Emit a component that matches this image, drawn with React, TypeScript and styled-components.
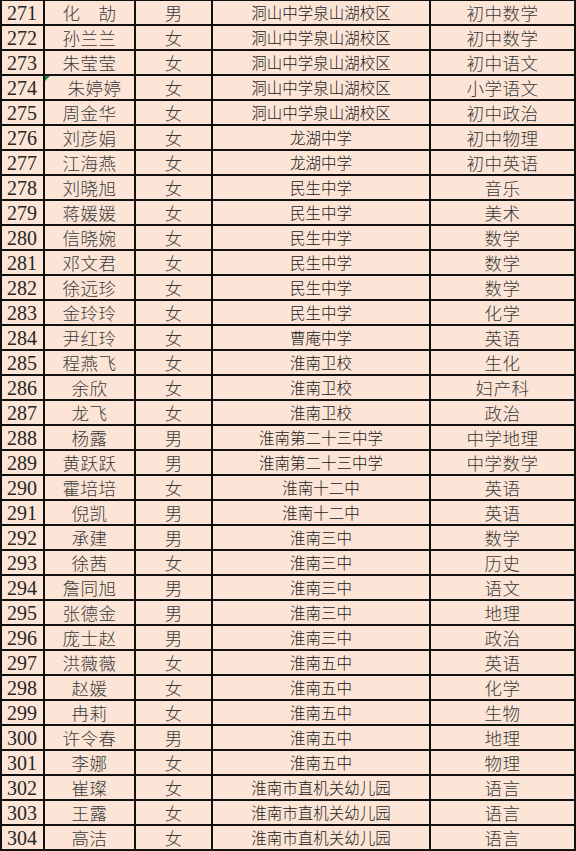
import React from 'react';
import styled, { createGlobalStyle } from 'styled-components';

type Kind = 'num' | 'name' | 'gender' | 'school' | 'subject';

interface Teacher {
  id: number;
  name: string;
  gender: string;
  school: string;
  subject: string;
  flagged?: boolean;
}

const rows: Teacher[] = [
  { id: 271, name: '化　劼', gender: '男', school: '洞山中学泉山湖校区', subject: '初中数学' },
  { id: 272, name: '孙兰兰', gender: '女', school: '洞山中学泉山湖校区', subject: '初中数学' },
  { id: 273, name: '朱莹莹', gender: '女', school: '洞山中学泉山湖校区', subject: '初中语文' },
  { id: 274, name: '朱婷婷', gender: '女', school: '洞山中学泉山湖校区', subject: '小学语文', flagged: true },
  { id: 275, name: '周金华', gender: '女', school: '洞山中学泉山湖校区', subject: '初中政治' },
  { id: 276, name: '刘彦娟', gender: '女', school: '龙湖中学', subject: '初中物理' },
  { id: 277, name: '江海燕', gender: '女', school: '龙湖中学', subject: '初中英语' },
  { id: 278, name: '刘晓旭', gender: '女', school: '民生中学', subject: '音乐' },
  { id: 279, name: '蒋媛媛', gender: '女', school: '民生中学', subject: '美术' },
  { id: 280, name: '信晓婉', gender: '女', school: '民生中学', subject: '数学' },
  { id: 281, name: '邓文君', gender: '女', school: '民生中学', subject: '数学' },
  { id: 282, name: '徐远珍', gender: '女', school: '民生中学', subject: '数学' },
  { id: 283, name: '金玲玲', gender: '女', school: '民生中学', subject: '化学' },
  { id: 284, name: '尹红玲', gender: '女', school: '曹庵中学', subject: '英语' },
  { id: 285, name: '程燕飞', gender: '女', school: '淮南卫校', subject: '生化' },
  { id: 286, name: '余欣', gender: '女', school: '淮南卫校', subject: '妇产科' },
  { id: 287, name: '龙飞', gender: '女', school: '淮南卫校', subject: '政治' },
  { id: 288, name: '杨露', gender: '男', school: '淮南第二十三中学', subject: '中学地理' },
  { id: 289, name: '黄跃跃', gender: '男', school: '淮南第二十三中学', subject: '中学数学' },
  { id: 290, name: '霍培培', gender: '女', school: '淮南十二中', subject: '英语' },
  { id: 291, name: '倪凯', gender: '男', school: '淮南十二中', subject: '英语' },
  { id: 292, name: '承建', gender: '男', school: '淮南三中', subject: '数学' },
  { id: 293, name: '徐茜', gender: '女', school: '淮南三中', subject: '历史' },
  { id: 294, name: '詹同旭', gender: '男', school: '淮南三中', subject: '语文' },
  { id: 295, name: '张德金', gender: '男', school: '淮南三中', subject: '地理' },
  { id: 296, name: '庞士赵', gender: '男', school: '淮南三中', subject: '政治' },
  { id: 297, name: '洪薇薇', gender: '女', school: '淮南五中', subject: '英语' },
  { id: 298, name: '赵媛', gender: '女', school: '淮南五中', subject: '化学' },
  { id: 299, name: '冉莉', gender: '女', school: '淮南五中', subject: '生物' },
  { id: 300, name: '许令春', gender: '男', school: '淮南五中', subject: '地理' },
  { id: 301, name: '李娜', gender: '女', school: '淮南五中', subject: '物理' },
  { id: 302, name: '崔璨', gender: '女', school: '淮南市直机关幼儿园', subject: '语言' },
  { id: 303, name: '王露', gender: '女', school: '淮南市直机关幼儿园', subject: '语言' },
  { id: 304, name: '高洁', gender: '女', school: '淮南市直机关幼儿园', subject: '语言' },
];

const GlobalStyle = createGlobalStyle`
  html, body {
    margin: 0;
    padding: 0;
    background: #fce5d6;
  }
`;

const Sheet = styled.div`
  width: 576px;
  box-sizing: border-box;
  display: flex;
  flex-direction: column;
  background: #fce5d6;
  border-left: 2px solid #111;
  border-top: 1px solid #111;
`;

const Row = styled.div`
  display: grid;
  grid-template-columns: 43px 91px 77px 218px 145px;
  height: 25px;
`;

const Cell = styled.div<{ $kind: Kind; $shift?: boolean }>`
  position: relative;
  box-sizing: border-box;
  display: flex;
  align-items: center;
  justify-content: ${p => (p.$kind === 'num' ? 'flex-start' : 'center')};
  padding-left: ${p => (p.$kind === 'num' ? '5px' : p.$shift ? '10px' : '0')};
  padding-top: 1px;
  border-right: 2px solid #111;
  border-bottom: 2px solid #111;
  white-space: nowrap;
  overflow: hidden;
  line-height: 1;
  font-family: ${p =>
    p.$kind === 'num'
      ? '"Liberation Serif", "Times New Roman", serif'
      : '"Noto Sans CJK SC", "Noto Sans", sans-serif'};
  font-size: ${p =>
    p.$kind === 'num' ? '20px' : p.$kind === 'school' ? '15.5px' : '17.5px'};
  font-weight: ${p => (p.$kind === 'num' ? 400 : 300)};
  color: ${p => (p.$kind === 'num' ? '#262626' : p.$kind === 'school' ? '#1a1a1a' : '#3a3a3a')};
  letter-spacing: ${p => (p.$kind === 'name' || p.$kind === 'subject' ? '0.5px' : '0')};
`;

const ErrorMark = styled.span`
  position: absolute;
  left: 0;
  top: 0;
  width: 0;
  height: 0;
  border-top: 5px solid #1f8a2e;
  border-right: 5px solid transparent;
`;

export default function App() {
  return (
    <>
      <GlobalStyle />
      <Sheet>
        {rows.map(r => (
          <Row key={r.id}>
            <Cell $kind="num">{r.id}</Cell>
            <Cell $kind="name" $shift={r.flagged}>
              {r.flagged && <ErrorMark />}
              {r.name}
            </Cell>
            <Cell $kind="gender">{r.gender}</Cell>
            <Cell $kind="school">{r.school}</Cell>
            <Cell $kind="subject">{r.subject}</Cell>
          </Row>
        ))}
      </Sheet>
    </>
  );
}
